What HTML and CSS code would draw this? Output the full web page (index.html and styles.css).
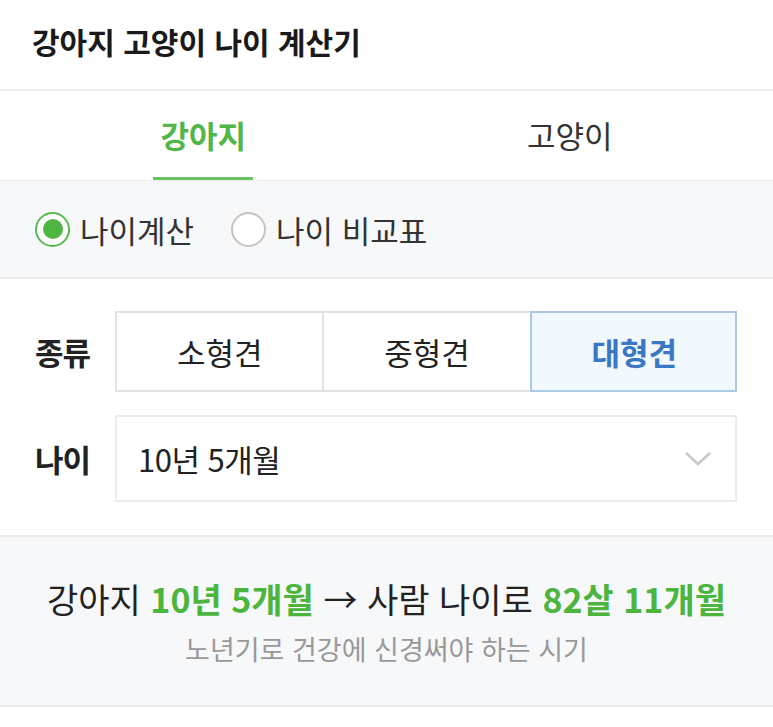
FILE: index.html
```html
<!DOCTYPE html>
<html lang="ko">
<head>
<meta charset="utf-8">
<title>강아지 고양이 나이 계산기</title>
<link rel="stylesheet" href="styles.css">
</head>
<body>
<header class="header"><h1 class="title">강아지 고양이 나이 계산기</h1></header>
<nav class="tabs">
  <div class="tab active"><span class="tab-label">강아지</span></div>
  <div class="tab"><span class="tab-label">고양이</span></div>
</nav>
<section class="modes">
  <label class="radio checked"><span class="radio-circle"></span>나이계산</label>
  <label class="radio"><span class="radio-circle"></span>나이 비교표</label>
</section>
<section class="form">
  <div class="row">
    <div class="row-label">종류</div>
    <div class="seg">
      <div class="seg-btn">소형견</div>
      <div class="seg-btn">중형견</div>
      <div class="seg-btn selected">대형견</div>
    </div>
  </div>
  <div class="row">
    <div class="row-label">나이</div>
    <div class="select">
      <span>10년 5개월</span>
      <svg class="chev" width="28" height="16" viewBox="0 0 28 16"><path d="M2 2 L14 13 L26 2" fill="none" stroke="#c9c9c9" stroke-width="2.6"/></svg>
    </div>
  </div>
</section>
<section class="result">
  <p class="result-main">강아지 <b>10년 5개월</b> → 사람 나이로 <b>82살 11개월</b></p>
  <p class="result-sub">노년기로 건강에 신경써야 하는 시기</p>
</section>
</body>
</html>
```

FILE: styles.css
```css
* { box-sizing: border-box; }
body {
  margin: 0;
  font-family: "Noto Sans CJK KR", "Noto Sans", sans-serif;
  color: #222;
  background: #fff;
}
.header {
  height: 91px;
  padding: 0 0 8px 32px;
  display: flex;
  align-items: center;
  border-bottom: 2px solid #efefef;
}
.title {
  margin: 0;
  font-size: 30px;
  font-weight: 700;
  color: #1a1a1a;
}
.tabs {
  display: flex;
  height: 90px;
  padding: 0 20px;
  border-bottom: 1px solid #eeeeee;
}
.tab {
  flex: 1;
  display: flex;
  justify-content: center;
}
.tab-label {
  display: flex;
  align-items: center;
  padding: 0 7px;
  font-size: 31px;
  color: #333;
  border-bottom: 3px solid transparent;
}
.tab.active .tab-label {
  color: #52b649;
  font-weight: 700;
  border-bottom-color: #6cc064;
}
.modes {
  height: 98px;
  background: #f7f8fa;
  border-bottom: 2px solid #eeeeee;
  display: flex;
  align-items: center;
  padding-left: 35px;
  gap: 37px;
}
.radio {
  display: flex;
  align-items: center;
  gap: 10px;
  font-size: 31px;
  color: #333;
}
.radio-circle {
  width: 35px;
  height: 35px;
  border-radius: 50%;
  border: 2px solid #c4c4c4;
  background: #fff;
  display: flex;
  align-items: center;
  justify-content: center;
}
.radio.checked .radio-circle {
  border-color: #5ab951;
}
.radio.checked .radio-circle::after {
  content: "";
  width: 20px;
  height: 20px;
  border-radius: 50%;
  background: #4db540;
}
.form {
  padding: 32px 36px 33px 35px;
  display: flex;
  flex-direction: column;
  gap: 23px;
}
.row {
  display: flex;
  align-items: center;
}
.row-label {
  width: 80px;
  font-size: 31px;
  font-weight: 700;
  color: #222;
  letter-spacing: -1px;
}
.seg {
  flex: 1;
  display: flex;
  height: 81px;
  border: 2px solid #e3e3e3;
}
.seg-btn {
  flex: 1;
  display: flex;
  align-items: center;
  justify-content: center;
  font-size: 31px;
  color: #222;
  border-left: 2px solid #e3e3e3;
}
.seg-btn:first-child { border-left: none; }
.seg-btn.selected {
  background: #f1f8fe;
  color: #3c77c3;
  font-weight: 700;
  outline: 2px solid #a9c9e6;
  outline-offset: -2px;
  margin: -2px -2px -2px 0;
}
.select {
  flex: 1;
  height: 87px;
  border: 2px solid #ececec;
  display: flex;
  align-items: center;
  justify-content: space-between;
  padding: 0 23px 0 21px;
  font-size: 31px;
  color: #222;
  letter-spacing: -0.5px;
}
.result {
  height: 172px;
  background: #f7f8fa;
  border-top: 2px solid #ececec;
  border-bottom: 2px solid #ececec;
  display: flex;
  flex-direction: column;
  align-items: center;
  justify-content: center;
  padding-top: 0;
}
.result-main {
  margin: 0;
  font-size: 34px;
  color: #222;
  letter-spacing: 0;
}
.result-main b {
  color: #4cb53e;
  font-weight: 700;
}
.result-sub {
  margin: 6px 0 0;
  font-size: 27px;
  color: #999;
}
```
